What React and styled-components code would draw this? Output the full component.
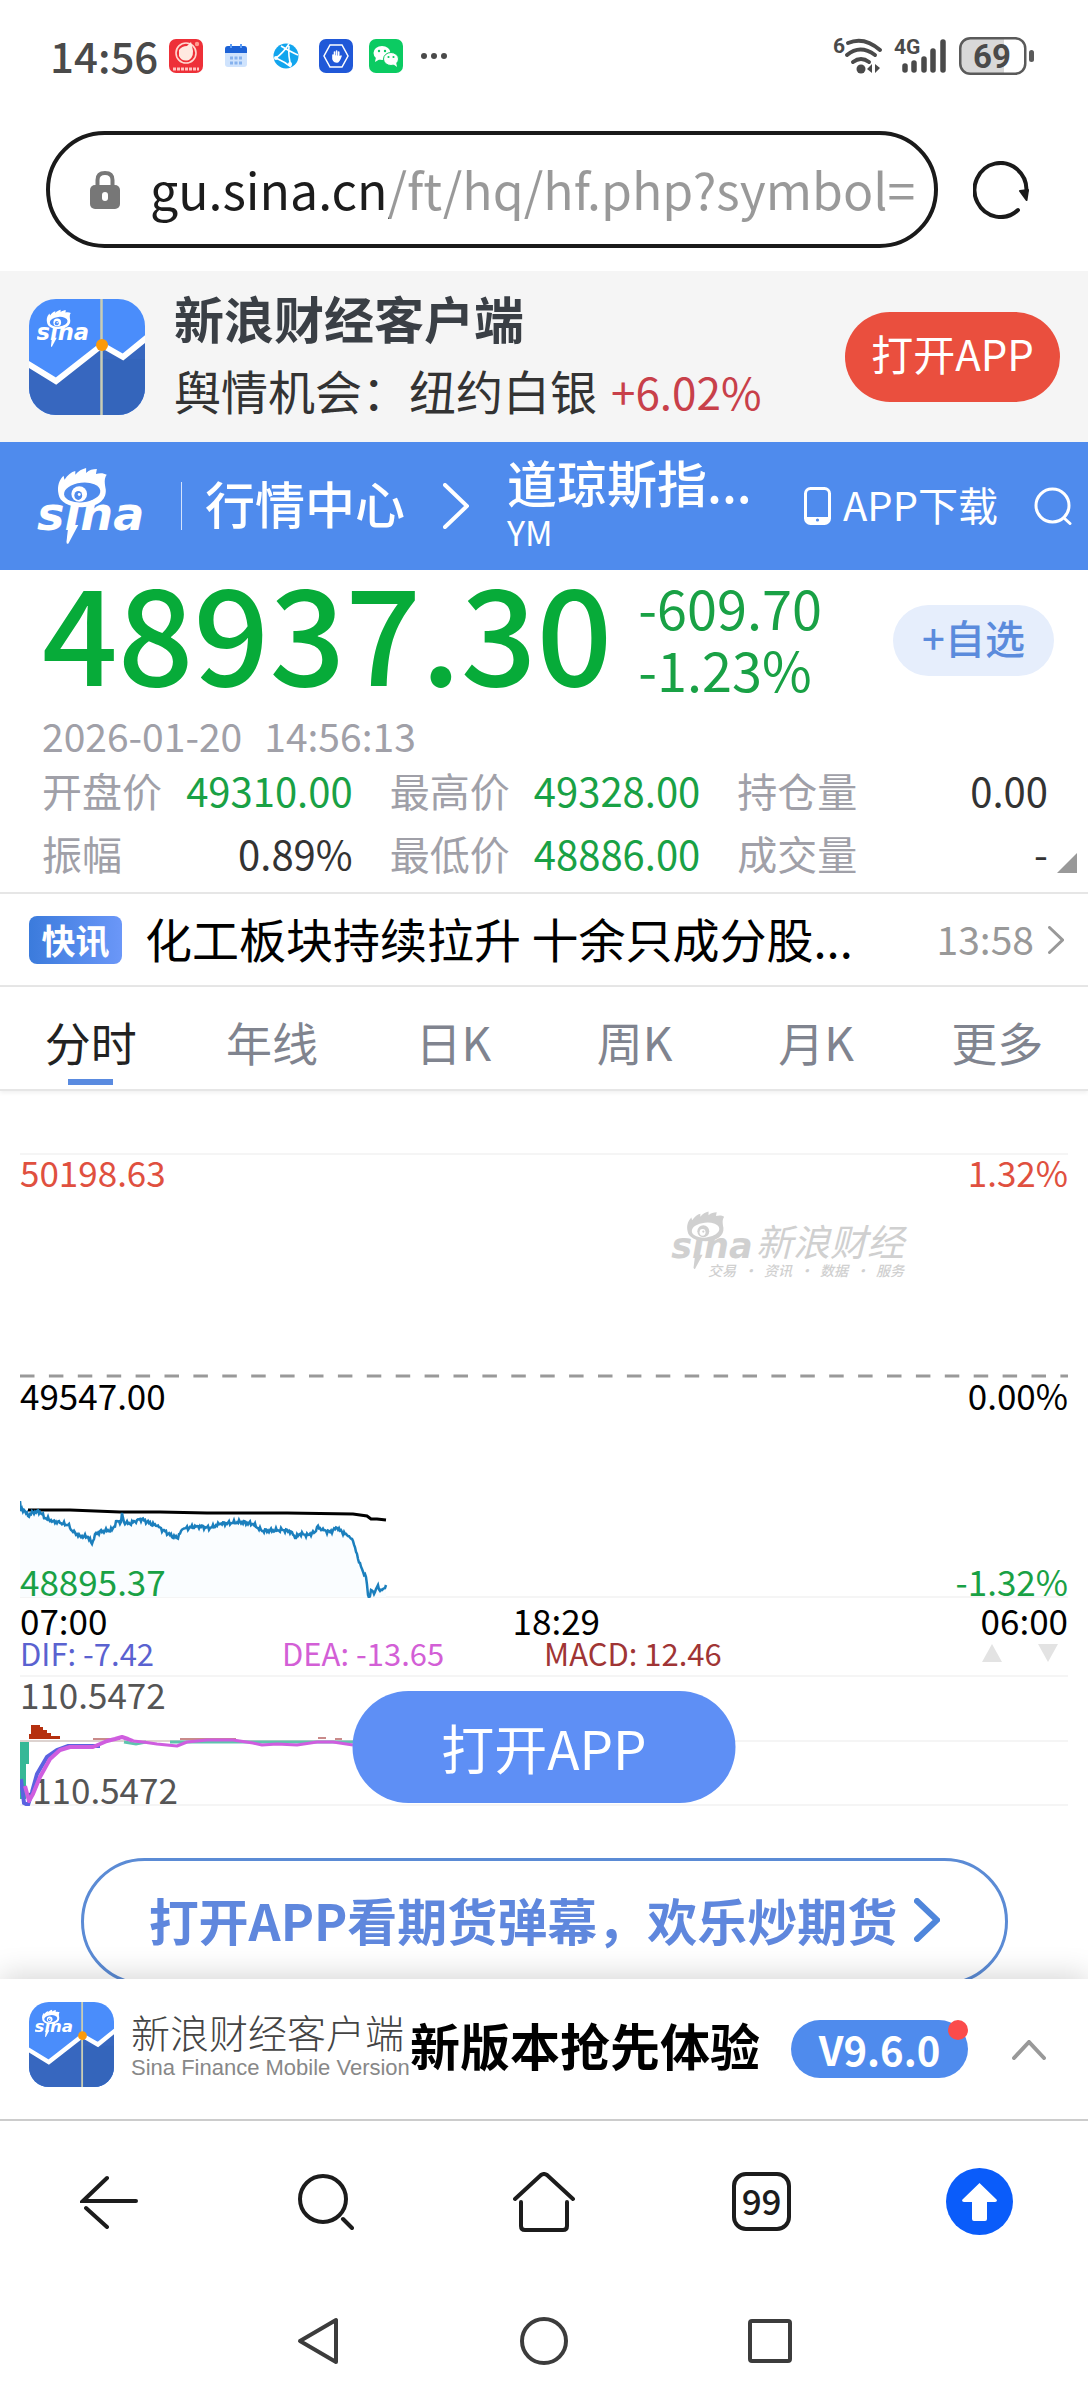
import React from "react";
import styled, { createGlobalStyle, css } from "styled-components";

const GlobalStyle = createGlobalStyle`
  *, *::before, *::after { box-sizing: border-box; }
  body {
    margin: 0;
    background: #fff;
    color: #333;
    font-family: "Noto Sans CJK SC", "Noto Sans", sans-serif;
    font-size: 40px;
  }
  a { color: inherit; text-decoration: none; }
  button { border: 0; margin: 0; padding: 0; background: none; font: inherit; color: inherit; cursor: pointer; }
  h1, h2, p, dl, dd, dt { margin: 0; font-weight: inherit; font-size: inherit; }
  svg { display: block; flex: none; }
`;

const UP = "#e0503f";
const DOWN = "#19a145";
const BRAND = "#4f8bed";
const MUTED = "#a0a0a8";

const Page = styled.div`
  display: flex;
  flex-direction: column;
`;

/* ---------- system status bar ---------- */

const StatusBar = styled.header`
  display: flex;
  align-items: center;
  justify-content: space-between;
  height: 112px;
  padding: 0 54px 0 50px;
  color: #4a4a4a;
`;

const StatusGroup = styled.div`
  display: flex;
  align-items: center;
  gap: ${(p) => p.$gap}px;
`;

const Clock = styled.time`
  font-size: 42px;
  line-height: 48px;
  font-weight: 500;
  padding-bottom: 2px;
`;

/* ---------- browser address bar ---------- */

const AddressRow = styled.div`
  display: flex;
  align-items: center;
  gap: 35px;
  padding: 19px 59px 23px 46px;
`;

const AddressPill = styled.label`
  display: flex;
  align-items: center;
  flex: 1;
  min-width: 0;
  height: 117px;
  padding: 0 18px 0 40px;
  border: 4px solid #1a1a1a;
  border-radius: 59px;
`;

const AddressInput = styled.input`
  flex: 1;
  min-width: 0;
  height: 80px;
  margin-left: 30px;
  padding: 0 0 4px;
  border: 0;
  outline: 0;
  font: inherit;
  font-size: 50px;
  color: transparent;
  background: linear-gradient(to right, #1c1c1c 239px, #999 239px);
  -webkit-background-clip: text;
  background-clip: text;
`;

/* ---------- download banner ---------- */

const Banner = styled.section`
  display: flex;
  align-items: center;
  height: 171px;
  padding: 0 28px 0 29px;
  background: #f5f5f5;
`;

const BannerText = styled.div`
  flex: 1;
  margin-left: 29px;
  padding-bottom: 6px;
`;

const BannerTitle = styled.h2`
  font-size: 50px;
  line-height: 74px;
  font-weight: 700;
  color: #3a3f45;
`;

const BannerSub = styled.p`
  font-size: 47px;
  line-height: 72px;
  white-space: nowrap;

  em { margin-left: 14px; font-style: normal; font-size: 44px; color: #c8404a; }
`;

const OpenButton = styled.button`
  height: 90px;
  width: 215px;
  padding-bottom: 8px;
  border-radius: 45px;
  background: #ea4f3e;
  color: #fff;
  font-size: 42px;
`;

/* ---------- site nav ---------- */

const SiteNav = styled.nav`
  display: flex;
  align-items: center;
  height: 128px;
  padding: 0 16px 0 38px;
  background: ${BRAND};
  color: #fff;
`;

const Divider = styled.span`
  width: 1px;
  height: 48px;
  margin: 0 23px 0 35px;
  background: #d5e3fb;
`;

const NavLink = styled.a`
  padding-bottom: 8px;
  margin-right: 38px;
  font-size: 50px;
  line-height: 60px;
  font-weight: 500;
  white-space: nowrap;
`;

const Symbol = styled.div`
  flex: 1;
  min-width: 0;
  margin-left: 38px;
  padding-bottom: 8px;

  h1 { font-size: 50px; line-height: 60px; font-weight: 500; }
  p { font-size: 34px; line-height: 42px; }
`;

const DownloadLink = styled.a`
  display: flex;
  align-items: center;
  gap: 12px;
  margin-right: 36px;
  font-size: 40px;
  line-height: 60px;

  span { padding-bottom: 4px; }
`;

/* ---------- quote ---------- */

const Quote = styled.section`
  position: relative;
  height: 324px;
  padding: 4px 34px 0 42px;
  border-bottom: 2px solid #e6e6e6;
`;

const PriceRow = styled.div`
  display: flex;
  align-items: flex-start;
  height: 137px;
  color: ${DOWN};
`;

const Price = styled.strong`
  font-size: 133px;
  line-height: 108px;
  font-weight: 500;
  color: #07ab39;
`;

const Change = styled.div`
  display: flex;
  flex-direction: column;
  flex: 1;
  margin-left: 26px;
  padding-top: 2px;
  font-size: 54px;
  line-height: 62px;
`;

const WatchButton = styled.button`
  width: 161px;
  height: 71px;
  margin-top: 31px;
  padding-bottom: 8px;
  border-radius: 36px;
  background: #e6eefc;
  color: #5b8bdc;
  font-size: 40px;
  line-height: 60px;
  font-weight: 500;
`;

const Stamp = styled.p`
  display: flex;
  gap: 22px;
  font-size: 39px;
  line-height: 48px;
  color: ${MUTED};
`;

const Stats = styled.dl`
  display: grid;
  grid-template-columns: repeat(3, 1fr);
  column-gap: 37px;
  padding-right: 6px;
  line-height: 63px;
`;

const Stat = styled.div`
  display: flex;
  justify-content: space-between;

  dt { color: ${MUTED}; }
  dd { color: ${(p) => (p.$down ? DOWN : "#333")}; }
`;

const Expand = styled.button`
  position: absolute;
  right: 11px;
  bottom: 19px;
  width: 20px;
  height: 20px;
  background: #999;
  clip-path: polygon(100% 0, 100% 100%, 0 100%);
`;

/* ---------- news strip ---------- */

const News = styled.a`
  display: flex;
  align-items: center;
  height: 93px;
  padding: 0 24px 0 29px;
  border-bottom: 2px solid #e6e6e6;
`;

const NewsTag = styled.span`
  width: 93px;
  border-radius: 8px;
  background: linear-gradient(to right, #3b7bdc, #6b97f8);
  color: #fff;
  text-align: center;
  font-size: 34px;
  line-height: 48px;
  font-weight: 700;
`;

const Headline = styled.span`
  flex: 1;
  margin-left: 23px;
  padding-bottom: 4px;
  color: #000;
  font-size: 47px;
  line-height: 60px;
  white-space: nowrap;
`;

const NewsTime = styled.time`
  margin-right: 14px;
  padding-bottom: 4px;
  color: #999;
  font-size: 39px;
  line-height: 48px;
`;

/* ---------- period tabs ---------- */

const Tabs = styled.div`
  display: grid;
  grid-template-columns: repeat(6, 1fr);
  height: 104px;
  border-bottom: 2px solid #e6e6e6;
  box-shadow: 0 2px 4px rgba(0, 0, 0, 0.06);
`;

const Tab = styled.button`
  display: flex;
  flex-direction: column;
  align-items: center;
  justify-content: flex-end;
  gap: 2px;
  padding-bottom: 4px;
  color: #80848f;
  font-size: 46px;
  line-height: 72px;

  &::after { content: ""; width: 45px; height: 6px; }
  ${(p) =>
    p.$active &&
    css`
      color: #222;
      &::after { background: #5a8be0; }
    `}
`;

/* ---------- charts ---------- */

const ChartArea = styled.section`
  padding: 62px 20px 0;
  font-size: 35px;
  line-height: 34px;
`;

const Plot = styled.div`
  position: relative;
  display: grid;
  grid-template-rows: 223px 222px;

  > svg { position: absolute; inset: 0; width: 100%; height: 100%; }
`;

const Band = styled.div`
  position: relative;
  display: flex;
  flex-direction: column;
  justify-content: space-between;
  padding-top: 2px;
`;

const Scale = styled.div`
  display: flex;
  justify-content: space-between;
  color: ${(p) => p.$color};
`;

const Watermark = styled.div`
  display: flex;
  justify-content: flex-end;
  gap: 2px;
  padding: 0 164px 98px 0;
  color: #d0d0d0;
  font-style: italic;

  p { font-size: 37px; line-height: 44px; padding-top: 15px; }
  small { display: flex; justify-content: space-between; margin-left: -48px; font-size: 14px; line-height: 16px; font-weight: 500; }
`;

const TimeAxis = styled.div`
  display: grid;
  grid-template-columns: 47% 1fr auto;
  height: 44px;
  padding-top: 5px;
  color: #000;
`;

const Legend = styled.div`
  display: grid;
  grid-template-columns: repeat(4, 1fr);
  height: 33px;
  font-size: 31px;
  line-height: 22px;
`;

const LegendItem = styled.span`
  color: ${(p) => p.$color};
`;

const Pager = styled.div`
  display: flex;
  justify-content: flex-end;
  gap: 36px;
  padding: 2px 10px 0 0;
`;

const PagerButton = styled.button`
  width: 20px;
  height: 18px;
  background: #e3e3e3;
  clip-path: ${(p) => (p.$down ? "polygon(0 0, 100% 0, 50% 100%)" : "polygon(50% 0, 100% 100%, 0 100%)")};
`;

const Macd = styled.div`
  position: relative;
  display: flex;
  flex-direction: column;
  justify-content: space-between;
  height: 131px;
  padding: 2px 0 0;
  color: #555;

  > svg { position: absolute; inset: 0; width: 100%; height: 100%; }
`;

const FloatingOpen = styled.button`
  position: absolute;
  top: 16px;
  left: 50%;
  width: 383px;
  height: 112px;
  transform: translateX(-50%);
  border-radius: 56px;
  background: #5e8ff5;
  color: #fff;
  font-size: 53px;
`;

const CallToAction = styled.section`
  height: 173px;
  padding: 52px 80px 0 81px;
  overflow: hidden;
`;

const CallButton = styled.button`
  display: flex;
  align-items: center;
  justify-content: center;
  gap: 17px;
  width: 100%;
  height: 127px;
  padding-bottom: 4px;
  border: 3px solid #5b8bd5;
  border-radius: 64px;
  color: #5f87dd;
  font-size: 50px;
  line-height: 60px;
  font-weight: 700;
  white-space: nowrap;

  span { padding-bottom: 2px; }
`;

/* ---------- bottom promo ---------- */

const Promo = styled.section`
  position: relative;
  display: flex;
  align-items: center;
  height: 142px;
  padding: 0 42px 10px 29px;
  background: #fff;
  border-bottom: 2px solid #ccc;
  box-shadow: 0 -4px 28px rgba(0, 0, 0, 0.16);
  clip-path: inset(-40px 0 0 0);
  white-space: nowrap;

  > button { margin-top: 12px; }
`;

const PromoName = styled.div`
  width: 279px;
  margin-left: 17px;
  color: #444;
  font-size: 39px;
  line-height: 48px;
  font-weight: 300;

  small {
    display: block;
    color: #888;
    font-family: "Liberation Sans", Arial, sans-serif;
    font-size: 22px;
    line-height: 26px;
    font-weight: 400;
  }
`;

const PromoTitle = styled.strong`
  color: #000;
  font-size: 50px;
  line-height: 60px;
  font-weight: 700;
`;

const Version = styled.a`
  position: relative;
  width: 177px;
  margin: 10px 44px 0 auto;
  border-radius: 29px;
  background: ${BRAND};
  color: #fff;
  text-align: center;
  font-size: 40px;
  line-height: 58px;
  font-weight: 700;

  &::after {
    content: "";
    position: absolute;
    top: 0;
    right: 0;
    width: 20px;
    height: 20px;
    border-radius: 50%;
    background: #fb4b4b;
  }
`;

/* ---------- browser and system bars ---------- */

const BrowserBar = styled.nav`
  display: grid;
  grid-template-columns: repeat(5, 1fr);
  place-items: center;
  height: 161px;
`;

const TabCount = styled.button`
  width: 59px;
  height: 59px;
  padding-bottom: 4px;
  border: 4px solid #1c1c1c;
  border-radius: 14px;
  color: #1c1c1c;
  font-size: 35px;
  line-height: 44px;
  font-weight: 500;
`;

const SystemBar = styled.nav`
  display: grid;
  grid-template-columns: repeat(3, 226px);
  justify-content: center;
  place-items: center;
  height: 118px;
`;

/* ---------- drawings ---------- */

function SinaLogo({ width, color = "#fff", hole = BRAND }) {
  return (
    <svg width={width} viewBox="0 0 110 78" overflow="visible" role="img" aria-label="sina">
      <text
        x="-1"
        y="63"
        fill={color}
        style={{ font: "italic 700 47px 'DejaVu Sans', sans-serif" }}
      >
        sina
      </text>
      <path d="M31 58 L41 58 L31 77 Q29 78 29 75 Z" fill={color} />
      <path
        d="M21 27 C19 18 22 12 26 8 L27 12 C30 7 34 4 38 3 L38 7 C41 3 45 1 49 0 L49 5 C52 2 56 1 60 1 L59 6 C63 5 67 5 70 7 C67 11 68 16 69 22 C70 33 60 40 45 40 C31 40 22 34 21 27 Z"
        fill={color}
      />
      <ellipse cx="45" cy="25" rx="18.500" ry="10" fill={hole} transform="rotate(-6 45 25)" />
      <ellipse cx="42" cy="26.500" rx="8" ry="8" fill={color} />
      <ellipse cx="41" cy="28" rx="4" ry="4.500" fill={hole} />
      <circle cx="42" cy="27" r="1.500" fill={color} />
    </svg>
  );
}

function AppIcon({ size, id }) {
  return (
    <svg width={size} height={size} viewBox="0 0 116 116" role="img" aria-label="新浪财经">
      <defs>
        <clipPath id={id}>
          <rect width="116" height="116" rx="27" />
        </clipPath>
      </defs>
      <g clipPath={`url(#${id})`}>
        <rect width="116" height="116" fill="#4a8dfb" />
        <path d="M0 65 L27 82 L73 46 L94 58 L116 40 V116 H0 Z" fill="#3767bf" />
        <rect x="73" y="60" width="43" height="56" fill="#2f5fb4" opacity=".3" />
        <path d="M-4 63 L27 82 L73 46 L94 58 L120 37" fill="none" stroke="#fff" strokeWidth="6" />
        <path d="M72.500 0 V116" stroke="#c9cdb4" strokeWidth="2.500" />
        <circle cx="73" cy="46" r="6" fill="#fb9a0a" />
        <svg x="8" y="10" width="53" height="39" viewBox="0 0 110 78">
          <SinaLogo width={110} hole="#4a8dfb" />
        </svg>
      </g>
    </svg>
  );
}

function Chevron({ width, height, stroke, up, color = "currentColor" }) {
  const s = stroke / 2;
  const d = up
    ? `M${s} ${height - s} L${width / 2} ${s} L${width - s} ${height - s}`
    : `M${s} ${s} L${width - s} ${height / 2} L${s} ${height - s}`;
  return (
    <svg width={width} height={height} viewBox={`0 0 ${width} ${height}`} fill="none" stroke={color} strokeWidth={stroke} strokeLinecap="round" aria-hidden="true">
      <path d={d} />
    </svg>
  );
}

function NotificationIcons() {
  return (
    <svg width="280" height="36" viewBox="0 0 280 36" aria-hidden="true">
      <rect x="0" y="1" width="34" height="34" rx="7" fill="#ee3038" />
      <circle cx="17" cy="15" r="10" fill="none" stroke="#ffd9d0" strokeWidth="1.6" />
      <path d="M10 12 Q13 8 18 8 L22 4 L23 8 Q26 18 20 22 Q13 24 10 18 Z" fill="#ffe9e0" />
      <circle cx="28" cy="6" r="2.2" fill="#ff9c90" />
      <path d="M4 31 H30" stroke="#ffc4c0" strokeWidth="3" strokeDasharray="3 1" />

      <rect x="56" y="8" width="22" height="21" rx="3" fill="#cfe3fd" />
      <path d="M56 15 V11 Q56 8 59 8 H75 Q78 8 78 11 V15 Z" fill="#1c62d6" />
      <path d="M62 6 V10 M72 6 V10" stroke="#5d9df5" strokeWidth="2" />
      <path d="M61 20 H73 M61 25 H73" stroke="#86b2ee" strokeWidth="3" strokeDasharray="3 1.5" />

      <circle cx="117" cy="18" r="12.5" fill="#12a5ee" />
      <path d="M107 20 Q114 15 120 6 M107 20 Q116 24 122 29 M120 8 Q119 18 122 28 M112 8 Q122 14 129 17" fill="none" stroke="#fff" strokeWidth="1.6" />
      <circle cx="107" cy="20" r="2" fill="#fff" />
      <circle cx="121" cy="26" r="2" fill="#fff" />

      <rect x="150" y="1" width="34" height="34" rx="7" fill="#2058d8" />
      <path d="M161 7 H173 L179 18 L173 29 H161 L155 18 Z" fill="none" stroke="#fff" strokeWidth="1.5" />
      <path d="M164 17 V21 Q165 24 168 24 Q170 24 172 18 M165.500 19 V14 M167.600 18 V13 M169.700 18 V14" stroke="#fff" strokeWidth="1.6" fill="#fff" strokeLinecap="round" />

      <rect x="200" y="1" width="34" height="34" rx="7" fill="#0bcb62" />
      <ellipse cx="213" cy="15" rx="8.5" ry="7" fill="#fff" />
      <path d="M207 19 L206 24 L211 21 Z" fill="#fff" />
      <ellipse cx="222" cy="21" rx="7.5" ry="6.5" fill="#fff" stroke="#0bcb62" strokeWidth="1" />
      <path d="M224 26 L228 29 L227 24 Z" fill="#fff" />
      <g fill="#0bcb62">
        <circle cx="210" cy="13" r="1.2" />
        <circle cx="216" cy="13" r="1.2" />
        <circle cx="219.5" cy="19" r="1.1" />
        <circle cx="224.5" cy="19" r="1.1" />
      </g>

      <g fill="#4a4a4a">
        <circle cx="255" cy="18" r="3" />
        <circle cx="265" cy="18" r="3" />
        <circle cx="275" cy="18" r="3" />
      </g>
    </svg>
  );
}

const GlyphText = styled.text`
  fill: #4a4a4a;
  stroke: none;
  font-family: Roboto, sans-serif;
  font-weight: 700;
`;

function Wifi() {
  return (
    <svg width="48" height="38" viewBox="0 0 48 38" overflow="visible" fill="none" stroke="#4a4a4a" strokeWidth="4" strokeLinecap="round">
      <GlyphText x="-1" y="16" fontSize="21">6</GlyphText>
      <path d="M14 6 Q30 -1 46 13" />
      <path d="M13 18 Q26 7 41 18" />
      <path d="M19 25 Q27 19 35 25" />
      <circle cx="27" cy="32" r="4.5" fill="#4a4a4a" stroke="none" />
      <path d="M38 27 V36 L33 32 Z M41 27 V36 L46 31 Z" fill="#4a4a4a" stroke="none" />
    </svg>
  );
}

function Signal() {
  return (
    <svg width="51" height="38" viewBox="0 0 51 38" overflow="visible" stroke="#4a4a4a" strokeWidth="5.5" strokeLinecap="round">
      <GlyphText x="-1" y="17" fontSize="21">4G</GlyphText>
      <path d="M10 29 V33 M19 26 V33 M29 22 V33 M38 14 V33 M48 5 V33" />
    </svg>
  );
}

function Battery() {
  return (
    <svg width="75" height="38" viewBox="0 0 75 38" overflow="visible">
      <path d="M11 1 H45 V37 H11 Q1 37 1 27 V11 Q1 1 11 1 Z" fill="#d8d8d8" />
      <rect x="1.25" y="1.25" width="65" height="35.5" rx="10" fill="none" stroke="#5a5a5a" strokeWidth="2.5" />
      <rect x="70" y="13" width="5" height="12" rx="2.5" fill="#5a5a5a" />
      <GlyphText x="33" y="31" fontSize="33" textAnchor="middle">69</GlyphText>
    </svg>
  );
}

function LockIcon() {
  return (
    <svg width="30" height="38" viewBox="0 0 30 38" aria-hidden="true">
      <path d="M7.5 16 V9 Q7.5 2 15 2 Q22.5 2 22.5 9 V16" fill="none" stroke="#777" strokeWidth="4" />
      <rect y="14" width="30" height="24" rx="5" fill="#777" />
      <rect x="12" y="21" width="6" height="9" rx="3" fill="#fff" />
    </svg>
  );
}

/* ---------- chart data ---------- */

const pricePoints = [
  [0, 348], [1, 358], [4, 357], [8, 363], [13, 359], [20, 359], [25, 365], [33, 368], [40, 370], [48, 372],
  [53, 379], [60, 383], [68, 384], [72, 391], [75, 381], [83, 378], [92, 377], [97, 368], [101, 369], [102, 360],
  [104, 369], [110, 371], [117, 367], [122, 366], [127, 369], [137, 373], [143, 377], [150, 382], [157, 385],
  [163, 376], [177, 373], [190, 375], [200, 371], [220, 369], [233, 371], [242, 378], [263, 377], [272, 379],
  [275, 385], [280, 381], [288, 382], [295, 379], [297, 374], [302, 377], [310, 379], [317, 375], [322, 379],
  [328, 383], [333, 388], [338, 406], [342, 416], [346, 424], [348, 442], [350, 443], [351, 437], [354, 441],
  [358, 432], [360, 438], [363, 436], [366, 432],
];

const averagePoints = "8,357 50,357 100,359 140,359 187,360 267,360 333,361 347,363 351,366 357,366 366,367";

/* Adds minute-level ticks between the sampled prices. */
function tickLine(points) {
  const out = [];
  points.forEach(([x, y], i) => {
    out.push(`${x},${y}`);
    const next = points[i + 1];
    if (!next) return;
    const steps = Math.floor(next[0] - x);
    for (let k = 1; k < steps; k += 1) {
      const t = k / steps;
      const px = x + (next[0] - x) * t;
      const wobble = Math.sin(px * 2.4) * 1.3 + Math.sin(px * 5.1) * 1.1;
      out.push(`${px.toFixed(1)},${(y + (next[1] - y) * t + wobble).toFixed(1)}`);
    }
  });
  return out.join(" ");
}

const priceLine = tickLine(pricePoints);

const periods = ["分时", "年线", "日K", "周K", "月K", "更多"];

const stats = [
  { label: "开盘价", value: "49310.00", down: true },
  { label: "最高价", value: "49328.00", down: true },
  { label: "持仓量", value: "0.00" },
  { label: "振幅", value: "0.89%" },
  { label: "最低价", value: "48886.00", down: true },
  { label: "成交量", value: "-" },
];

export default function App() {
  return (
    <Page>
      <GlobalStyle />

      <StatusBar>
        <StatusGroup $gap={11}>
          <Clock>14:56</Clock>
          <NotificationIcons />
        </StatusGroup>
        <StatusGroup $gap={13}>
          <Wifi />
          <Signal />
          <Battery />
        </StatusGroup>
      </StatusBar>

      <AddressRow>
        <AddressPill>
          <LockIcon />
          <AddressInput type="text" aria-label="网址" defaultValue="gu.sina.cn/ft/hq/hf.php?symbol=" />
        </AddressPill>
        <button type="button" aria-label="刷新">
          <svg width="56" height="58" viewBox="0 0 56 58" fill="none" stroke="#1a1a1a" strokeWidth="4" strokeLinecap="round">
            <path d="M45 49 A26 27 0 1 1 53.5 30" />
            <path d="M47 30 L55 29 L53.5 39 Z" fill="#1a1a1a" strokeWidth="2" strokeLinejoin="round" />
          </svg>
        </button>
      </AddressRow>

      <Banner>
        <AppIcon size={116} id="banner-icon" />
        <BannerText>
          <BannerTitle>新浪财经客户端</BannerTitle>
          <BannerSub>
            舆情机会：纽约白银<em>+6.02%</em>
          </BannerSub>
        </BannerText>
        <OpenButton type="button">打开APP</OpenButton>
      </Banner>

      <SiteNav>
        <a href="#home" aria-label="新浪首页">
          <SinaLogo width={108} />
        </a>
        <Divider />
        <NavLink href="#market">行情中心</NavLink>
        <Chevron width={26} height={46} stroke={4} />
        <Symbol>
          <h1>道琼斯指...</h1>
          <p>YM</p>
        </Symbol>
        <DownloadLink href="#download">
          <svg width="27" height="38" viewBox="0 0 27 38" aria-hidden="true">
            <rect x="1.5" y="1.5" width="24" height="35" rx="5" fill="none" stroke="#fff" strokeWidth="3" />
            <path d="M2 30 H25 V33 Q25 37 21 37 H6 Q2 37 2 33 Z" fill="#fff" />
            <circle cx="13.5" cy="33" r="1.6" fill={BRAND} />
          </svg>
          <span>APP下载</span>
        </DownloadLink>
        <button type="button" aria-label="搜索">
          <svg width="38" height="38" viewBox="0 0 38 38" fill="none" stroke="#fff" strokeWidth="3" strokeLinecap="round">
            <circle cx="18.5" cy="18.5" r="16.5" />
            <path d="M30 31 L36 36.5" />
          </svg>
        </button>
      </SiteNav>

      <Quote>
        <PriceRow>
          <Price>48937.30</Price>
          <Change>
            <span>-609.70</span>
            <span>-1.23%</span>
          </Change>
          <WatchButton type="button">+自选</WatchButton>
        </PriceRow>
        <Stamp>
          <span>2026-01-20</span>
          <span>14:56:13</span>
        </Stamp>
        <Stats>
          {stats.map((s) => (
            <Stat key={s.label} $down={s.down}>
              <dt>{s.label}</dt>
              <dd>{s.value}</dd>
            </Stat>
          ))}
        </Stats>
        <Expand type="button" aria-label="展开" />
      </Quote>

      <News href="#news">
        <NewsTag>快讯</NewsTag>
        <Headline>化工板块持续拉升 十余只成分股...</Headline>
        <NewsTime>13:58</NewsTime>
        <Chevron width={16} height={28} stroke={3} color="#999" />
      </News>

      <Tabs role="tablist">
        {periods.map((name, i) => (
          <Tab key={name} type="button" role="tab" aria-selected={i === 0} $active={i === 0}>
            {name}
          </Tab>
        ))}
      </Tabs>

      <ChartArea>
        <Plot>
          <svg viewBox="0 0 1048 445" preserveAspectRatio="none" aria-hidden="true">
            <path d="M0 1 H1048 M0 444 H1048" stroke="#f5f5f5" strokeWidth="2" />
            <path d="M0 223 H1048" stroke="#999" strokeWidth="3" strokeDasharray="14.5 14.4" />
            <polygon points={`0,444 ${priceLine} 366,444`} fill="#fafdff" />
            <polyline points={averagePoints} fill="none" stroke="#000" strokeWidth="3" />
            <polyline points={priceLine} fill="none" stroke="#1b7fbd" strokeWidth="2.5" />
          </svg>
          <Band>
            <Scale $color={UP}>
              <span>50198.63</span>
              <span>1.32%</span>
            </Scale>
            <Watermark>
              <SinaLogo width={82} color="#d0d0d0" hole="#fff" />
              <div>
                <p>新浪财经</p>
                <small>
                  <span>交易</span>
                  <span>·</span>
                  <span>资讯</span>
                  <span>·</span>
                  <span>数据</span>
                  <span>·</span>
                  <span>服务</span>
                </small>
              </div>
            </Watermark>
          </Band>
          <Band>
            <Scale $color="#000">
              <span>49547.00</span>
              <span>0.00%</span>
            </Scale>
            <Scale $color={DOWN}>
              <span>48895.37</span>
              <span>-1.32%</span>
            </Scale>
          </Band>
        </Plot>
        <TimeAxis>
          <span>07:00</span>
          <span>18:29</span>
          <span>06:00</span>
        </TimeAxis>
        <Legend>
          <LegendItem $color="#5a62d0">DIF: -7.42</LegendItem>
          <LegendItem $color="#d35fd6">DEA: -13.65</LegendItem>
          <LegendItem $color="#a03535">MACD: 12.46</LegendItem>
          <Pager>
            <PagerButton type="button" aria-label="上一个指标" />
            <PagerButton type="button" aria-label="下一个指标" $down />
          </Pager>
        </Legend>
        <Macd>
          <span>110.5472</span>
          <span>-110.5472</span>
          <svg viewBox="0 0 1048 131" preserveAspectRatio="none" fill="none" aria-hidden="true">
            <path d="M0 1 H1048 M0 66 H1048 M0 130 H1048" stroke="#f5f5f5" strokeWidth="2" />
            <path d="M0 66 H334" stroke="#ddd3d0" strokeWidth="2" />
            <path d="M0 67 H9 V89 H6 V124 H0 Z" fill="#36b897" />
            <path d="M9 64 V59 H11 V50 H20 V52 H23 V55 H27 V58 H31 V61 H40 V64 Z" fill="#b5300f" />
            <path d="M104 67 L116 69 L126 67 M150 67 H333" stroke="#5fc4ae" strokeWidth="3" />
            <path d="M73 64 H100 M160 64 H216 M298 63 H306 M315 64 H322" stroke="#c98a8a" strokeWidth="2" />
            <path d="M1 104 L4 128 L8 130 L12 117 L17 99 L27 82 L37 75 L48 71 L80 71" stroke="#5a62e0" strokeWidth="4" />
            <path d="M5 111 L9 126 L13 119 L20 102 L30 84 L40 75 L50 72 L73 72 L80 69 L87 66 L95 64 L102 62 L108 64 L113 66" stroke="#cf5ddf" strokeWidth="4" strokeLinejoin="round" />
            <path d="M113 66 L123 67 L137 69 L157 71 L167 67 L187 65 L213 65 L233 68 L242 70 L257 69 L277 70 L297 67 L313 67 L333 70" stroke="#cf5ddf" strokeWidth="3" strokeLinejoin="round" />
          </svg>
          <FloatingOpen type="button">打开APP</FloatingOpen>
        </Macd>
      </ChartArea>

      <CallToAction>
        <CallButton type="button">
          <span>打开APP看期货弹幕，欢乐炒期货</span>
          <Chevron width={26} height={44} stroke={6} color="#4f86db" />
        </CallButton>
      </CallToAction>

      <Promo>
        <AppIcon size={85} id="promo-icon" />
        <PromoName>
          新浪财经客户端
          <small>Sina Finance Mobile Version</small>
        </PromoName>
        <PromoTitle>新版本抢先体验</PromoTitle>
        <Version href="#update">V9.6.0</Version>
        <button type="button" aria-label="收起">
          <Chevron width={34} height={20} stroke={4} up color="#999" />
        </button>
      </Promo>

      <BrowserBar>
        <button type="button" aria-label="后退">
          <svg width="58" height="54" viewBox="0 0 58 54" fill="none" stroke="#1c1c1c" strokeWidth="4" strokeLinecap="round">
            <path d="M27 3 L3 26 H56 M6 33 L27 52" />
          </svg>
        </button>
        <button type="button" aria-label="搜索">
          <svg width="56" height="58" viewBox="0 0 56 58" fill="none" stroke="#1c1c1c" strokeWidth="4" strokeLinecap="round">
            <circle cx="25" cy="26" r="23" />
            <path d="M45 46 L54 55" />
          </svg>
        </button>
        <button type="button" aria-label="主页">
          <svg width="62" height="60" viewBox="0 0 62 60" fill="none" stroke="#1c1c1c" strokeWidth="4" strokeLinecap="round" strokeLinejoin="round">
            <path d="M2 27 L28 3 Q31 1 34 3 L60 27" />
            <path d="M8 30 V54 Q8 58 12 58 H50 Q54 58 54 54 V30" />
          </svg>
        </button>
        <TabCount type="button">99</TabCount>
        <button type="button" aria-label="返回顶部">
          <svg width="67" height="67" viewBox="0 0 67 67">
            <circle cx="33.5" cy="33.5" r="33.5" fill="#0a5cfa" />
            <path d="M33.5 15 L51 32 Q51 34 49 34 H41 V51 Q41 53 39 53 H28 Q26 53 26 51 V34 H18 Q16 34 16 32 Z" fill="#fff" />
          </svg>
        </button>
      </BrowserBar>

      <SystemBar>
        <button type="button" aria-label="系统返回">
          <svg width="42" height="48" viewBox="0 0 42 48" fill="none" stroke="#3c3c3c" strokeWidth="4" strokeLinejoin="round">
            <path d="M39 3 V45 L3 24 Z" />
          </svg>
        </button>
        <button type="button" aria-label="系统主页">
          <svg width="48" height="48" viewBox="0 0 48 48" fill="none" stroke="#3c3c3c" strokeWidth="4">
            <circle cx="24" cy="24" r="22" />
          </svg>
        </button>
        <button type="button" aria-label="最近任务">
          <svg width="44" height="44" viewBox="0 0 44 44" fill="none" stroke="#3c3c3c" strokeWidth="4">
            <rect x="2" y="2" width="40" height="40" rx="2" />
          </svg>
        </button>
      </SystemBar>
    </Page>
  );
}
